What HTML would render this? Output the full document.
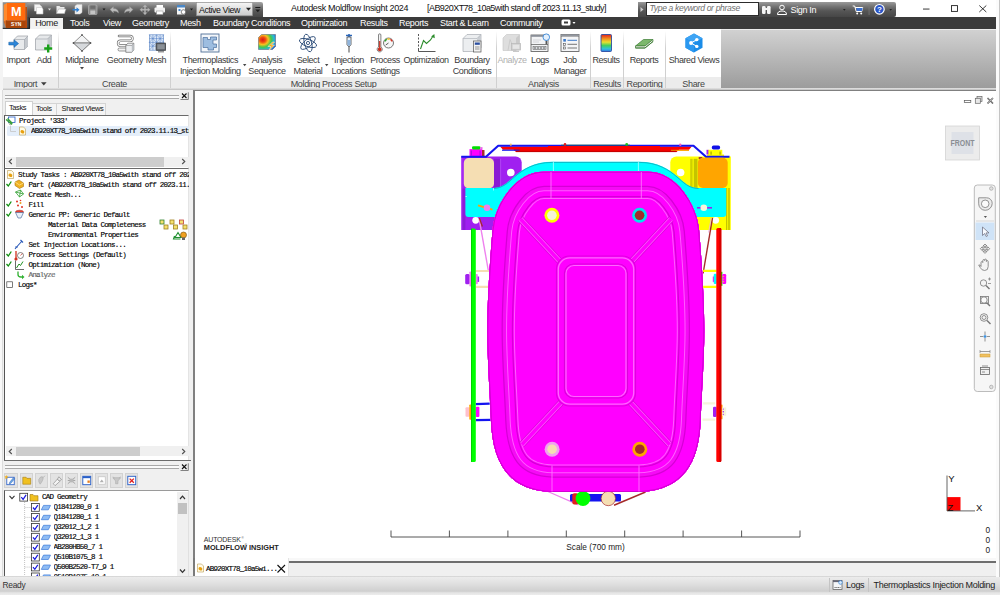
<!DOCTYPE html>
<html><head><meta charset="utf-8"><title>Autodesk Moldflow Insight 2024</title>
<style>
*{box-sizing:border-box;margin:0;padding:0}
html,body{width:1000px;height:595px;overflow:hidden;background:#f0f0f0;font-family:"Liberation Sans",sans-serif;font-size:9px;color:#222}
.abs{position:absolute}
#titlebar{left:0;top:0;width:1000px;height:17px;background:#fff}
#qat{left:27px;top:2px;width:236px;height:15px;background:linear-gradient(#a6a6a6 0%,#7c7c7c 30%,#585858 60%,#474747 100%);border-radius:0 2px 0 0}
#tabbar{left:0;top:17px;width:1000px;height:12px;background:#3b3b3b}
.tab{position:absolute;top:0;height:12px;line-height:12px;color:#fff;font-size:9px;letter-spacing:-.33px;white-space:nowrap}
#hometab{left:30px;top:18px;width:33px;height:11px;background:#f2f2f2;color:#222;font-size:9px;letter-spacing:-.33px;line-height:11px;text-align:center}
#ribbon{left:0;top:29px;width:1000px;height:61px;background:linear-gradient(#d2d2d2,#9a9a9a)}
.panel{position:absolute;top:0;height:48px;background:#fff}
.plabel{position:absolute;top:48px;height:11px;background:#ececec;text-align:center;font-size:9px;letter-spacing:-.33px;line-height:15px;color:#444;border-left:1px solid #d8d8d8}
.btn{position:absolute;top:0;text-align:center;font-size:9px;letter-spacing:-.4px;line-height:11.100px;color:#3a3a3a;white-space:nowrap;width:0}
.btn .t{position:absolute;top:26.300px;left:0;transform:translateX(-50%)}
.mono{font-family:"Liberation Mono",monospace;font-size:7.500px;letter-spacing:-0.750px;white-space:pre;color:#000;-webkit-text-stroke:.15px #000}
.vsep{position:absolute;top:2px;width:1px;height:57px;background:linear-gradient(#fff,#d0d0d0 30%,#d0d0d0)}
.ic{position:absolute;left:-10px;top:4px;width:20px;height:20px}
.grip{height:4px;border-top:1px solid #a8a8a8;border-bottom:1px solid #a8a8a8;background:#fafafa}
.ptab{font-size:7.500px;line-height:12px;color:#111;white-space:nowrap;letter-spacing:-.4px}
.sarrow{font-size:9px;line-height:10px;color:#444;font-family:"Liberation Mono",monospace;font-weight:bold}
.tt{font-size:9px;letter-spacing:-.33px;line-height:13px;color:#111;white-space:nowrap}
</style></head><body>
<!-- ===== TITLE BAR ===== -->
<div id="titlebar" class="abs"></div>
<div id="qat" class="abs"></div>
<div id="tabbar" class="abs">
 <span class="tab" style="left:70px">Tools</span>
 <span class="tab" style="left:103px">View</span>
 <span class="tab" style="left:132px">Geometry</span>
 <span class="tab" style="left:180px">Mesh</span>
 <span class="tab" style="left:213px">Boundary Conditions</span>
 <span class="tab" style="left:301px">Optimization</span>
 <span class="tab" style="left:360px">Results</span>
 <span class="tab" style="left:399px">Reports</span>
 <span class="tab" style="left:440px">Start &amp; Learn</span>
 <span class="tab" style="left:500px">Community</span>
 <svg class="abs" style="left:561px;top:2px" width="16" height="8" viewBox="0 0 16 8"><rect x="0.5" y="0.5" width="9" height="6" rx="1.5" fill="#fff"/><rect x="3" y="2.5" width="4" height="2" fill="#3b3b3b"/><path d="M11.5 3 h3 l-1.5 2z" fill="#fff"/></svg>
</div>
<div id="hometab" class="abs">Home</div>
<div class="abs" id="leftstrip" style="left:0;top:0;width:3px;height:90px;background:#f4f4f4;z-index:3"></div>
<!-- logo -->
<svg class="abs" style="left:0;top:0;z-index:4" width="31" height="30" viewBox="0 0 31 30">
 <rect x="2.700" y="2.200" width="24.500" height="26.300" fill="#8e8e8e"/>
 <path d="M2.700 28.300 H29.600 V18" fill="none" stroke="#1a1a1a" stroke-width=".8"/>
 <path d="M3.800 4.800 L7 3 V20.400 L3.800 21.600z" fill="#ff8a2e"/>
 <path d="M5.900 20.400 H26.900 V28 H5.900z" fill="#a8450a"/>
 <path d="M25.300 7 H26.900 V28 H25.300z" fill="#b8480a"/>
 <path d="M3.800 21.600 L5.900 20.400 V28z" fill="#d8681c"/>
 <rect x="7" y="3" width="18.300" height="17.400" fill="#ff6a0d"/>
 <text x="16.400" y="16.100" font-family="Liberation Sans,sans-serif" font-weight="bold" font-size="12.700" fill="#fff" text-anchor="middle">M</text>
 <text x="16.200" y="25.800" font-family="Liberation Sans,sans-serif" font-weight="bold" font-size="4.900" fill="#fff" text-anchor="middle" textLength="10.200" lengthAdjust="spacingAndGlyphs">SYN</text>
</svg>
<!-- QAT icons -->
<svg class="abs" style="left:27px;top:2px" width="236" height="15" viewBox="0 0 236 15">
 <!-- new doc -->
 <path d="M7.5 2.5 h5 l2.5 2.5 v4 h-7.5z" fill="#f4f4f4" stroke="#d0d0d0" stroke-width=".6"/><path d="M9.5 5.5 h5 l1.5 1.5 v5 h-6.5z" fill="#fff" stroke="#c8c8c8" stroke-width=".6"/>
 <path d="M21 6.5 h3 l-1.5 2z" fill="#ddd"/>
 <!-- open -->
 <path d="M29.5 4 h3 l1 1 h4 v6.5 h-8z" fill="#eaeaea"/><path d="M31.5 7 h7.5 l-1.5 4.5 h-8z" fill="#fff" stroke="#999" stroke-width=".5"/>
 <!-- save/import -->
 <path d="M48 4 l2 -1.5 h5 v8 l-2 1.5 h-5z" fill="#f0f0f0" stroke="#ccc" stroke-width=".5"/><path d="M45.5 7 h4 v-1.8 l3 2.6 -3 2.6 v-1.8 h-4z" fill="#2f7fd0"/>
 <!-- disk (disabled) -->
 <rect x="61.500" y="3" width="8.500" height="9.500" rx="1" fill="#8a8a8a" stroke="#b4b4b4" stroke-width=".7"/><rect x="63.300" y="3.500" width="5" height="3.300" fill="#6e6e6e"/><rect x="63.300" y="8.500" width="5" height="3.500" fill="#c4c4c4"/>
 <path d="M75.500 6.500 h3 l-1.500 2z" fill="#1a1a1a"/>
 <!-- undo redo -->
 <path d="M83 7.500 l3.500 -3 v2 q5 0 5 4.500 q-1.500 -2 -5 -2 v2z" fill="#bcbcbc" stroke="#8a8a8a" stroke-width=".4"/>
 <path d="M106 7.500 l-3.500 -3 v2 q-5 0 -5 4.500 q1.500 -2 5 -2 v2z" fill="#bcbcbc" stroke="#8a8a8a" stroke-width=".4"/>
 <g fill="#b4b4b4" stroke="#8c8c8c" stroke-width=".3"><path d="M118 2.500 l2.300 2.600 h-1.500 v1.900 h1.900 v-1.500 l2.600 2.300 -2.600 2.300 v-1.500 h-1.900 v1.900 h1.500 l-2.300 2.600 -2.300 -2.600 h1.500 v-1.900 h-1.900 v1.500 l-2.600 -2.300 2.600 -2.300 v1.500 h1.900 v-1.900 h-1.500z"/></g>
 <!-- print -->
 <rect x="129.500" y="3" width="6.500" height="3" fill="#fff"/><rect x="127.500" y="5.500" width="10.500" height="5" rx="1" fill="#f2f2f2"/><rect x="129.500" y="9" width="6.500" height="3.500" fill="#fff" stroke="#888" stroke-width=".5"/>
 <!-- view icon -->
 <rect x="150" y="3" width="8" height="9.500" fill="#f6f6f6"/><rect x="150" y="3" width="8" height="2.500" fill="#4a88c8"/><rect x="151.500" y="7" width="2" height="2" fill="#4a88c8"/><circle cx="156.500" cy="10" r="2.300" fill="#fff" stroke="#555" stroke-width=".7"/>
 <path d="M163 6.500 h3 l-1.500 2z" fill="#1a1a1a"/>
 <!-- combo -->
 <rect x="169.500" y=".5" width="56" height="13.300" fill="url(#cg)" stroke="#8a8a8a" stroke-width=".5"/>
 <defs><linearGradient id="cg" x1="0" y1="0" x2="0" y2="1"><stop offset="0" stop-color="#f6f6f6"/><stop offset="1" stop-color="#cacaca"/></linearGradient></defs>
 <text x="172" y="10.500" font-family="Liberation Sans,sans-serif" font-size="8.800" letter-spacing="-.4" fill="#111">Active View</text>
 <path d="M219 5.800 h5 l-2.500 3z" fill="#222"/>
 <rect x="228.300" y="5" width="5" height="1" fill="#1c1c1c"/><path d="M228.300 7.500 h5 l-2.500 2.800z" fill="#1c1c1c"/>
</svg>
<div class="abs tt" style="left:291px;top:2px">Autodesk Moldflow Insight 2024</div>
<div class="abs tt" style="left:427px;top:2px;letter-spacing:-.55px">[AB920XT78_10a5with stand off 2023.11.13_study]</div>
<!-- search / sign-in bar -->
<div class="abs" style="left:637.500px;top:1.600px;width:258.500px;height:15.200px;background:linear-gradient(#9a9a9a 0%,#747474 30%,#555 60%,#464646 100%);border-radius:0 2px 2px 0"></div>
<div class="abs" style="left:646px;top:2.400px;width:113px;height:13.600px;background:#fff;border:1px solid #2c2c2c;font-style:italic;color:#707070;font-size:8.600px;letter-spacing:-.35px;line-height:11.600px;padding-left:2.500px;white-space:nowrap">Type a keyword or phrase</div>
<svg class="abs" style="left:637px;top:2px" width="259" height="15" viewBox="0 0 259 15">
 <path d="M3.500 5 l3 2.500 -3 2.500z" fill="#ccc"/>
 <!-- binoculars -->
 <rect x="125" y="4" width="3.600" height="8" rx="1.200" fill="#f4f4f4"/><rect x="130" y="4" width="3.600" height="8" rx="1.200" fill="#f4f4f4"/><rect x="128" y="6" width="3" height="2" fill="#f4f4f4"/>
 <!-- person -->
 <circle cx="145" cy="5.500" r="2.300" fill="none" stroke="#fff" stroke-width="1"/><path d="M140.500 12.500 q0 -3.500 4.500 -3.500 q4.500 0 4.500 3.500z" fill="none" stroke="#fff" stroke-width="1"/>
 <text x="153.500" y="10.800" font-family="Liberation Sans,sans-serif" font-size="9" letter-spacing="-.33" fill="#fff">Sign In</text>
 <path d="M206 7 h2.600 l-1.300 1.800z" fill="#222"/>
 <!-- cart -->
 <g transform="translate(12.200 0)"><path d="M203.500 4 h2 l1.500 5.500 h5.500 l1 -4 h-7.500" fill="none" stroke="#fff" stroke-width="1"/><circle cx="208" cy="11.500" r="1" fill="#fff"/><circle cx="212" cy="11.500" r="1" fill="#fff"/><path d="M207 6 h6.500 l-.8 3 h-5z" fill="#3a6fd0"/></g>
 <rect x="231.700" y="2" width=".7" height="11" fill="#7c7c7c"/>
 <circle cx="242.400" cy="7.300" r="4.800" fill="#2a56c8" stroke="#fff" stroke-width="1.200"/>
 <text x="242.400" y="10.400" font-family="Liberation Sans,sans-serif" font-weight="bold" font-size="8" fill="#fff" text-anchor="middle">?</text>
 <path d="M252.400 7 h2.600 l-1.300 1.800z" fill="#222"/>
</svg>
<!-- window controls -->
<svg class="abs" style="left:910px;top:0" width="90" height="17" viewBox="0 0 90 17">
 <rect x="13" y="8.600" width="6.500" height=".9" fill="#222"/>
 <rect x="41.500" y="5.600" width="6" height="5.800" fill="none" stroke="#222" stroke-width=".9"/>
 <path d="M69.300 5.500 l7 6.500 M76.300 5.500 l-7 6.500" stroke="#222" stroke-width=".9"/>
</svg>
<!-- ===== RIBBON ===== -->
<div id="ribbon" class="abs">
 <div class="panel" style="left:3px;width:718px"></div>
 <div class="plabel" style="left:3px;width:55px;border-left:none">Import <svg width="6" height="4" viewBox="0 0 6 4" style="position:relative;top:-.8px;margin-left:2px"><path d="M0 .3 h5.600 l-2.800 3.200z" fill="#3c3c3c"/></svg></div>
 <div class="plabel" style="left:58px;width:112px">Create</div>
 <div class="plabel" style="left:170px;width:326px">Molding Process Setup</div>
 <div class="plabel" style="left:496px;width:94px">Analysis</div>
 <div class="plabel" style="left:590px;width:33px">Results</div>
 <div class="plabel" style="left:623px;width:42px">Reporting</div>
 <div class="plabel" style="left:665px;width:56px">Share</div>
 <div class="vsep" style="left:57.500px"></div><div class="vsep" style="left:169.500px"></div><div class="vsep" style="left:495.500px"></div><div class="vsep" style="left:590px"></div><div class="vsep" style="left:622.500px"></div><div class="vsep" style="left:665px"></div>
 <div class="abs" style="left:0;top:0;width:3px;height:60px;background:#f4f4f4"></div>
 <div class="abs" style="left:0;top:59px;width:1000px;height:2px;background:linear-gradient(#e6e6e6,#bdbdbd)"></div>

 <div class="abs" id="toplight" style="left:721px;top:0;width:279px;height:.8px;background:#ececec"></div>
 <!-- Import -->
 <div class="btn" style="left:18px"><svg class="ic" viewBox="0 0 20 20"><path d="M6 6.500 l3.500 -3.500 h10.500 v10 l-3.500 3.500 h-10.500z" fill="#e8eaec" stroke="#8a8f96" stroke-width=".6"/><path d="M16.500 6.500 l3.500 -3.500 v10 l-3.500 3.500z" fill="#c4c8cd"/><path d="M6 6.500 h10.500 l3.500 -3.500 M16.500 6.500 v10" fill="none" stroke="#9aa0a8" stroke-width=".6"/><path d="M.8 9.200 h5.200 v-2.400 l4.600 3.800 -4.600 3.800 v-2.400 h-5.200z" fill="#2c86d8" stroke="#1a5ea0" stroke-width=".5"/></svg><span class="t">Import</span></div>
 <!-- Add -->
 <div class="btn" style="left:44px"><svg class="ic" viewBox="0 0 20 20"><path d="M1.500 6 l4 -4 h12 v11 l-4 4 h-12z" fill="#e6e8ea" stroke="#8a8f96" stroke-width=".6"/><path d="M13.500 6 l4 -4 v11 l-4 4z" fill="#c6cace"/><path d="M1.500 6 h12 l4 -4" fill="none" stroke="#9aa0a8" stroke-width=".6"/><path d="M13 11.500 h2.400 v2.800 h2.800 v2.400 h-2.800 v2.800 h-2.400 v-2.800 h-2.800 v-2.400 h2.800z" fill="#18a018"/></svg><span class="t">Add</span></div>
 <!-- Midplane -->
 <div class="btn" style="left:82px"><svg class="ic" viewBox="0 0 20 20"><path d="M10 2 l8.500 8 -8.500 8 -8.500 -8z" fill="#f2f3f4" stroke="#777" stroke-width=".8"/><path d="M1.500 10 h17" stroke="#777" stroke-width=".8"/><path d="M1.500 10 h17 l-8.500 8z" fill="#d6d9dc" stroke="#777" stroke-width=".8"/><circle cx="10" cy="2" r=".9" fill="#555"/><circle cx="1.500" cy="10" r=".9" fill="#555"/><circle cx="18.500" cy="10" r=".9" fill="#555"/><circle cx="10" cy="18" r=".9" fill="#555"/></svg><span class="t">Midplane</span><svg class="abs" style="left:-2px;top:38px" width="4" height="3"><path d="M0 0 h4 l-2 2.500z" fill="#444"/></svg></div>
 <!-- Geometry -->
 <div class="btn" style="left:125px"><svg class="ic" viewBox="0 0 20 20"><path d="M4 3 H15 a2.400 2.400 0 0 1 0 4.800 H5.500 a2.400 2.400 0 0 0 0 4.800 H12" fill="none" stroke="#6c6c6c" stroke-width="2.500" stroke-linecap="round"/><path d="M4 3 H15 a2.400 2.400 0 0 1 0 4.800 H5.500 a2.400 2.400 0 0 0 0 4.800 H12" fill="none" stroke="#f6f6f6" stroke-width="1.200" stroke-linecap="round"/><rect x="3" y="15" width="9" height="3" rx="1.500" fill="#f2f2f2" stroke="#6c6c6c" stroke-width=".7"/><path d="M10.800 12.500 l2 -2.300 h6 v6.800 l-2 2.300 h-6z" fill="#eceef0" stroke="#6a6a6a" stroke-width=".7"/><path d="M16.800 12.500 l2 -2.300 v6.800 l-2 2.300z" fill="#bcc0c5"/><path d="M10.800 12.500 h6 l2 -2.300" fill="none" stroke="#888" stroke-width=".6"/></svg><span class="t">Geometry</span></div>
 <!-- Mesh -->
 <div class="btn" style="left:156px"><svg class="ic" viewBox="0 0 20 20"><rect x="3.300" y="1.800" width="14.400" height="15.400" fill="#dce8f8" stroke="#5a84c4" stroke-width=".6"/><path d="M3.300 5.600 h14.400 M3.300 9.400 h14.400 M3.300 13.200 h14.400 M6.900 1.800 v15.400 M10.500 1.800 v15.400 M14.100 1.800 v15.400" stroke="#4a78c0" stroke-width=".5"/><path d="M3.300 1.800 l3.600 3.800 3.600 -3.800 3.600 3.800 3.600 -3.800 M3.300 9.400 l3.600 -3.800 3.600 3.800 3.600 -3.800 3.600 3.800 M3.300 9.400 l3.600 3.800 3.600 -3.800 M3.300 17.200 l3.600 -4" stroke="#4a78c0" stroke-width=".45" fill="none"/><rect x="10" y="10" width="10" height="7.500" rx=".8" fill="#5a5e64" stroke="#3a3a3a" stroke-width=".6"/><rect x="11.300" y="11.200" width="7.400" height="5" fill="#8a9096"/><rect x="12" y="18" width="6" height="1.500" fill="#9a9a9a"/></svg><span class="t">Mesh</span></div>
 <!-- Thermoplastics -->
 <div class="btn" style="left:210.300px"><svg class="ic" viewBox="0 0 20 20"><rect x="1" y="1" width="18" height="18" fill="#f3f6fa" stroke="#4f6f98" stroke-width=".9"/><path d="M3 4.500 h4.500 v2 h3 v-2.500 h6 v3 h-3.500 v4 h3.500 v3.500 h-3 v2.500 h-5.500 v-2.500 h-5z" fill="#9dbde0" stroke="#4a6f9c" stroke-width=".7"/></svg><span class="t">Thermoplastics<br>Injection Molding</span></div>
 <svg class="abs" style="left:243.300px;top:34.500px" width="4" height="3"><path d="M0 0 h3.400 l-1.700 2.200z" fill="#444"/></svg>
 <!-- Analysis Sequence -->
 <div class="btn" style="left:267px"><svg class="ic" viewBox="0 0 20 20"><defs><radialGradient id="rg" cx="0.250" cy="0.350" r="0.900"><stop offset="0" stop-color="#d81818"/><stop offset=".18" stop-color="#f04a10"/><stop offset=".36" stop-color="#f8c020"/><stop offset=".55" stop-color="#48c848"/><stop offset=".75" stop-color="#28b8d8"/><stop offset="1" stop-color="#2848c8"/></radialGradient></defs><path d="M1.500 4.500 l3 -3 h14 v12 l-3 3 h-14z" fill="url(#rg)" stroke="#556" stroke-width=".5"/><path d="M15.500 9 l-4.500 4.500 h3 l-2.500 4.500 6 -6 h-3 l3 -3z" fill="#f8a818" stroke="#fff" stroke-width=".5"/></svg><span class="t">Analysis<br>Sequence</span></div>
 <!-- Select Material -->
 <div class="btn" style="left:308px"><svg class="ic" viewBox="0 0 20 20"><g fill="none" stroke="#2c4c78" stroke-width=".9"><ellipse cx="10" cy="10" rx="9" ry="3.600" transform="rotate(20 10 10)"/><ellipse cx="10" cy="10" rx="9" ry="3.600" transform="rotate(75 10 10)"/><ellipse cx="10" cy="10" rx="9" ry="3.600" transform="rotate(-40 10 10)"/><circle cx="10" cy="10" r="1.600"/></g></svg><span class="t">Select<br>Material</span></div>
 <svg class="abs" style="left:325px;top:35.300px" width="4" height="3"><path d="M0 0 h3.400 l-1.700 2.200z" fill="#444"/></svg>
 <!-- Injection Locations -->
 <div class="btn" style="left:349px"><svg class="ic" viewBox="0 0 20 20"><path d="M7 2.500 h6 M10 1 v3" stroke="#2a66b8" stroke-width="1.600"/><path d="M8 4 h4 v7.500 l-1.500 2 h-1 l-1.500 -2z" fill="#e8f0f8" stroke="#444" stroke-width=".8"/><path d="M8.400 7 h3.200 v4.300 l-1.300 1.800 h-.6 l-1.300 -1.800z" fill="#8fb4dc"/><path d="M10 13.500 v6" stroke="#333" stroke-width=".9"/></svg><span class="t">Injection<br>Locations</span></div>
 <!-- Process Settings -->
 <div class="btn" style="left:385px"><svg class="ic" viewBox="0 0 20 20"><path d="M3.500 2 a1.200 1.200 0 0 1 2.400 0 v12 a2.600 2.600 0 1 1 -2.400 0z" fill="#f4f4f4" stroke="#555" stroke-width=".7"/><path d="M4.100 8 h1.200 v6.500 a1.900 1.900 0 1 1 -1.200 0z" fill="#c83020"/><circle cx="13.500" cy="10" r="5" fill="#f6f6f6" stroke="#555" stroke-width=".8"/><path d="M9.800 8.500 a4 4 0 0 1 2 -2.200" stroke="#28a028" stroke-width="1.300" fill="none"/><path d="M12.300 6.200 a4 4 0 0 1 2.600 0" stroke="#f0c020" stroke-width="1.300" fill="none"/><path d="M15.400 6.400 a4 4 0 0 1 1.800 2.100" stroke="#d83020" stroke-width="1.300" fill="none"/><path d="M13.500 10 l-2.800 2" stroke="#333" stroke-width=".8"/></svg><span class="t">Process<br>Settings</span></div>
 <!-- Optimization -->
 <div class="btn" style="left:426px"><svg class="ic" viewBox="0 0 20 20"><path d="M2.500 1 v2 M2.500 4.500 v2 M2.500 8 v2 M2.500 11.500 v2 M2.500 15 v3.500 h17" fill="none" stroke="#444" stroke-width=".9"/><path d="M4.500 16 l3 -8.500 3 3 4 -3.500 2.500 -4" fill="none" stroke="#2c8c2c" stroke-width="1.100"/><path d="M18.300 1 l.5 4.300 -3.600 -1.800z" fill="#2c8c2c"/></svg><span class="t">Optimization</span></div>
 <!-- Boundary Conditions -->
 <div class="btn" style="left:472px"><svg class="ic" viewBox="0 0 20 20"><path d="M1 5.500 l4 -4 h14 v13 l-4 4 h-14z" fill="#eceef0" stroke="#9a9fa6" stroke-width=".6"/><path d="M15 5.500 l4 -4 v13 l-4 4z" fill="#c9cdd2"/><path d="M1 5.500 h14 l4 -4" fill="none" stroke="#a8adb4" stroke-width=".6"/><rect x="11.500" y="8" width="7.500" height="11" fill="#f4f4f4" stroke="#555" stroke-width=".7"/><rect x="12.800" y="9.500" width="5" height="2.300" fill="#2a4ea0"/><path d="M13 14 h4.500 M13 16 h4.500" stroke="#555" stroke-width=".6"/></svg><span class="t">Boundary<br>Conditions</span></div>
 <!-- Analyze (disabled) -->
 <div class="btn" style="left:512px;color:#b0b0b0"><svg class="ic" viewBox="0 0 20 20"><path d="M1 5 l3.500 -3.500 h13 v12.500 l-3.500 3.500 h-13z" fill="#dedede" stroke="#c4c4c4" stroke-width=".6"/><path d="M14 5 l3.500 -3.500 v12.500 l-3.500 3.500z" fill="#cacaca"/><path d="M6 17.500 l2 -11 2 4.500" fill="none" stroke="#c8c8c8" stroke-width=".8"/><rect x="9.500" y="10.500" width="9" height="6.500" fill="#d2d2d2" stroke="#b8b8b8" stroke-width=".7"/><rect x="10.800" y="11.800" width="6.400" height="4" fill="#e6e6e6"/><rect x="11" y="17.600" width="6" height="1.300" fill="#c4c4c4"/></svg><span class="t">Analyze</span></div>
 <!-- Logs -->
 <div class="btn" style="left:540px"><svg class="ic" viewBox="0 0 20 20"><rect x="1" y="2" width="17" height="16.500" fill="#f2f3f5" stroke="#555" stroke-width=".8"/><rect x="1" y="2" width="17" height="1.800" fill="#8a8f98"/><path d="M1 11.500 h17" stroke="#555" stroke-width=".7"/><rect x="3" y="13.500" width="13" height="3" fill="#d8dade" stroke="#555" stroke-width=".5"/><path d="M4 15 h2 M7 15 h2 M10 15 h2 M13 15 h2" stroke="#333" stroke-width=".7"/><path d="M3 7 h8 M3 9 h6" stroke="#c0c4c8" stroke-width=".6"/><path d="M16.300 7.500 v3.800" stroke="#555" stroke-width="1.500"/><circle cx="16.300" cy="4.200" r="3.300" fill="#e4f0fc" stroke="#3a88d8" stroke-width=".9"/></svg><span class="t">Logs</span></div>
 <!-- Job Manager -->
 <div class="btn" style="left:570px"><svg class="ic" viewBox="0 0 20 20"><rect x="1" y="1.500" width="18" height="17" fill="#f4f5f7" stroke="#555" stroke-width=".8"/><rect x="1" y="1.500" width="18" height="1.600" fill="#9a9fa8"/><path d="M1 3.300 h18" stroke="#555" stroke-width=".5"/><rect x="3.300" y="6" width="2.600" height="2.600" fill="#3a78c8"/><path d="M7.500 7.300 h9.500" stroke="#3a78c8" stroke-width="1"/><rect x="3.600" y="10.300" width="2" height="2" fill="none" stroke="#555" stroke-width=".6"/><path d="M7.500 11.300 h9.500 M7.500 15 h9.500" stroke="#555" stroke-width=".8"/><rect x="3.600" y="14" width="2" height="2" fill="none" stroke="#555" stroke-width=".6"/></svg><span class="t">Job<br>Manager</span></div>
 <!-- Results -->
 <div class="btn" style="left:606px"><svg class="ic" viewBox="0 0 20 20"><defs><linearGradient id="lg" x1="0" y1="0" x2="0" y2="1"><stop offset="0" stop-color="#e02020"/><stop offset=".25" stop-color="#f09020"/><stop offset=".45" stop-color="#e8e030"/><stop offset=".65" stop-color="#40d060"/><stop offset=".85" stop-color="#30c0e0"/><stop offset="1" stop-color="#3070e0"/></linearGradient></defs><rect x="5" y="1.500" width="10.500" height="17" rx="1" fill="url(#lg)" stroke="#2c4ca0" stroke-width=".9"/></svg><span class="t">Results</span></div>
 <!-- Reports -->
 <div class="btn" style="left:644px"><svg class="ic" viewBox="0 0 20 20"><path d="M1.500 13 l8 -6.500 h9.500 l-8 6.500z" fill="#7cb86c" stroke="#3c7c34" stroke-width=".7"/><path d="M1.500 13 h9.500 l8 -6.500 v2 l-8 6.500 h-9.500z" fill="#f4f4f0" stroke="#3c7c34" stroke-width=".7"/><path d="M1.500 15 h9.500 l8 -6.500" fill="none" stroke="#3c7c34" stroke-width=".9"/></svg><span class="t">Reports</span></div>
 <!-- Shared Views -->
 <div class="btn" style="left:694px"><svg class="ic" viewBox="0 0 20 20"><path d="M10 .5 l8.500 4.800 v9.400 l-8.500 4.800 -8.500 -4.800 v-9.400z" fill="#1a8ce8"/><path d="M10 .5 l8.500 4.800 -8.500 4.700 -8.500 -4.700z" fill="#3ea4f4"/><path d="M10 10 v9.500 l-8.500 -4.800 v-9.400z" fill="#2a98f0"/><path d="M7 10 l5.500 -3.200 M7 10 l5.500 3.200" stroke="#fff" stroke-width="1"/><circle cx="7" cy="10" r="1.900" fill="#fff"/><circle cx="12.800" cy="6.600" r="1.700" fill="#fff"/><circle cx="12.800" cy="13.400" r="1.700" fill="#fff"/></svg><span class="t">Shared Views</span></div>
</div>
<!-- ===== LEFT PANEL ===== -->
<div class="abs" style="left:0;top:90px;width:194px;height:487px;background:#f0f0f0"></div>
<div class="abs" style="left:0;top:90px;width:3px;height:487px;background:#f8f8f8;border-right:1px solid #dcdcdc"></div>
<!-- grip 1 -->
<div class="abs grip" style="left:5px;top:95px;width:174px"></div>
<svg class="abs" style="left:180px;top:92px" width="9" height="8" viewBox="0 0 9 8"><path d="M8.300 .3 V7.500 H.5" fill="none" stroke="#666" stroke-width=".8"/><path d="M2 1.500 l4.500 4.500 M6.500 1.500 l-4.500 4.500" stroke="#111" stroke-width="1.100"/></svg>
<!-- tabs -->
<div class="abs" style="left:4.500px;top:101px;width:28px;height:14px;background:#fff;border:1px solid #d0d0d0;border-bottom:none"></div>
<div class="abs" style="left:32.500px;top:102.500px;width:24.500px;height:12px;border:1px solid #d4d4d4;border-bottom:none;border-left:none;background:#f4f4f4"></div>
<div class="abs" style="left:57px;top:102.500px;width:49px;height:12px;border:1px solid #d4d4d4;border-bottom:none;border-left:none;background:#f4f4f4"></div>
<div class="abs ptab" style="left:9px;top:101.500px">Tasks</div>
<div class="abs ptab" style="left:36px;top:103px">Tools</div>
<div class="abs ptab" style="left:61.500px;top:103px;letter-spacing:-.35px">Shared Views</div>
<!-- project box -->
<div class="abs" style="left:4px;top:114.500px;width:185px;height:53.500px;background:#fff;border-left:1.500px solid #555;border-top:1.500px solid #6a6a6a;border-right:1px solid #e4e4e4"></div>
<div class="abs" style="left:7px;top:125.500px;width:181.500px;height:10px;background:#e4eefa;border-radius:1.500px"></div>
<svg class="abs" style="left:5px;top:115.500px" width="28" height="20" viewBox="0 0 28 20">
 <rect x="3.500" y="1" width="6.500" height="5.500" fill="#fff" stroke="#2a60c8" stroke-width=".8"/><path d="M1 3.500 l6 5 M2.500 2.500 l5 5" stroke="#3aa03a" stroke-width="1.300"/><path d="M4 7.500 l1.500 1.500" stroke="#888" stroke-width="1"/>
 <path d="M5.500 9.500 V15.500 H11" fill="none" stroke="#c4c4c4" stroke-width=".8"/>
 <path d="M14.500 11 h4 l2 2 v6 h-6z" fill="#fffbe8" stroke="#b89a50" stroke-width=".6"/><ellipse cx="17.400" cy="15.800" rx="2" ry="1.600" fill="#e8a010" transform="rotate(25 17.400 15.800)"/>
</svg>
<div class="abs mono" style="left:19px;top:116px;line-height:10px">Project '333'</div>
<div class="abs mono" style="left:31px;top:126px;line-height:10px;width:157.500px;overflow:hidden">AB920XT78_10a5with stand off 2023.11.13_study</div>
<!-- hscroll 1 -->
<div class="abs" style="left:5.500px;top:157px;width:183px;height:9.500px;background:#f0f0f0"></div>
<div class="abs" style="left:16px;top:157px;width:148px;height:9.500px;background:#cdcdcd"></div>
<svg class="abs" style="left:7.5px;top:157.2px" width="5" height="9" viewBox="0 0 5 9"><path d="M3.800 2 L1.200 4.500 L3.800 7" fill="none" stroke="#505050" stroke-width="1.100"/></svg><svg class="abs" style="left:181px;top:157.2px" width="5" height="9" viewBox="0 0 5 9"><path d="M1.200 2 L3.800 4.500 L1.200 7" fill="none" stroke="#505050" stroke-width="1.100"/></svg>
<!-- study tasks box -->
<div class="abs" style="left:4px;top:168px;width:185px;height:291.500px;background:#fff;border-left:1.500px solid #555;border-top:1.500px solid #6a6a6a;border-right:1px solid #e4e4e4"></div>
<div class="abs" style="left:4px;top:459.800px;width:186.600px;height:1.200px;background:#6c6c6c"></div>
<div class="abs mono" style="left:18px;top:169.600px;line-height:10px;width:171px;overflow:hidden"><div>Study Tasks : AB920XT78_10a5with stand off 2023</div><div style="padding-left:10.500px">Part (AB920XT78_10a5with stand off 2023.11.13</div><div style="padding-left:10.500px">Create Mesh...</div><div style="padding-left:10.500px">Fill</div><div style="padding-left:10.500px">Generic PP: Generic Default</div><div style="padding-left:30px">Material Data Completeness</div><div style="padding-left:30px">Environmental Properties</div><div style="padding-left:10.500px">Set Injection Locations...</div><div style="padding-left:10.500px">Process Settings (Default)</div><div style="padding-left:10.500px">Optimization (None)</div><div style="padding-left:10.500px;color:#8a8a8a">Analyze</div><div style="margin-left:0">Logs*</div></div>
<svg class="abs" style="left:5px;top:169px" width="184" height="122" viewBox="0 0 184 122">
 <!-- study icon -->
 <path d="M2.500 1.500 h4 l2 2 v6 h-6z" fill="#fffbe8" stroke="#b89a50" stroke-width=".6"/><ellipse cx="5.400" cy="6.300" rx="2" ry="1.600" fill="#e8a010" transform="rotate(25 5.400 6.300)"/>
 <!-- check marks -->
 <g fill="none" stroke="#109010" stroke-width="1.300"><path d="M1.500 15 l1.800 2 3 -4.500"/><path d="M1.500 35 l1.800 2 3 -4.500"/><path d="M1.500 45 l1.800 2 3 -4.500"/><path d="M1.500 85 l1.800 2 3 -4.500"/><path d="M1.500 95 l1.800 2 3 -4.500"/></g>
 <!-- part icon -->
 <path d="M10 13 l4 -2 4.500 3 v3.500 l-4 2 -4.500 -3z" fill="#f0b020" stroke="#a87410" stroke-width=".6"/><path d="M10 13 l4.500 3 4 -2" fill="none" stroke="#fff0b0" stroke-width=".6"/>
 <!-- create mesh -->
 <path d="M10.500 23 l5 -2 3 4 -4 3z M15.500 21 l-1 7 M10.500 23 l8 2" fill="none" stroke="#30a030" stroke-width=".8"/>
 <!-- fill -->
 <circle cx="12" cy="32.500" r="1" fill="#e03020"/><circle cx="15.500" cy="34" r="1" fill="#e8a020"/><circle cx="13" cy="36.500" r="1" fill="#e03020"/><circle cx="17" cy="38" r="1" fill="#e03020"/><circle cx="15.500" cy="31.500" r=".8" fill="#e03020"/>
 <!-- material -->
 <ellipse cx="14.500" cy="43" rx="4" ry="1.800" fill="#e84030" stroke="#a02018" stroke-width=".5"/><path d="M10.500 43.500 l2.500 5.500 h3 l2.500 -5.500z" fill="#e8f0f8" stroke="#5070a0" stroke-width=".7"/>
 <!-- right icons rows 5,6 -->
 <g stroke-width=".8" fill="#f4e070"><rect x="155" y="51" width="4" height="4" stroke="#308030"/><rect x="159" y="56" width="4" height="4" stroke="#a08020"/><rect x="165" y="51" width="4" height="4" stroke="#a08020"/><rect x="168.500" y="56" width="4" height="4" stroke="#a08020"/><rect x="174.500" y="51" width="4" height="4" stroke="#c04040"/><rect x="178" y="56" width="4" height="4" stroke="#a08020"/></g>
 <path d="M170 68.500 l3 -5 3 5z M171.500 70 h4 M169.500 67 l-1 3 h3" fill="none" stroke="#209030" stroke-width="1.100"/>
 <circle cx="178.500" cy="66" r="3" fill="#f0a020" stroke="#705010" stroke-width=".6"/><rect x="177" y="68.500" width="3" height="2.500" fill="#666"/>
 <!-- injection -->
 <path d="M17 72 l-4.500 5 M15.500 71 l2.500 2.500 M12.500 77 l-2.500 3" stroke="#2858b8" stroke-width="1.100" fill="none"/><path d="M10 78 h3" stroke="#2858b8" stroke-width=".8"/>
 <!-- process settings -->
 <path d="M11 82 v7" stroke="#d03020" stroke-width="1.300"/><circle cx="11" cy="90" r="1.600" fill="#d03020"/><circle cx="15.500" cy="86.500" r="3" fill="#fff" stroke="#555" stroke-width=".7"/><path d="M15.500 86.500 l1.800 -2" stroke="#d03020" stroke-width=".7"/>
 <!-- optimization -->
 <path d="M10.500 91.500 v9 h8.500" fill="none" stroke="#444" stroke-width=".8"/><path d="M11.500 99 l2.500 -4 1.500 1.500 2.500 -4" fill="none" stroke="#209020" stroke-width="1"/>
 <!-- analyze -->
 <path d="M13 102.500 v3 q0 2.500 3 2.500 h1.500" fill="none" stroke="#30b030" stroke-width="1.300"/><path d="M17 105.800 l2.500 2.200 -2.500 2.200z" fill="#30b030"/>
 <!-- logs checkbox -->
 <rect x="1.800" y="112.800" width="5.600" height="5.600" fill="#fff" stroke="#444" stroke-width=".7"/>
</svg>
<!-- hscroll 2 -->
<div class="abs" style="left:5.500px;top:446px;width:183px;height:10px;background:#f0f0f0"></div>
<div class="abs" style="left:16px;top:446.500px;width:124px;height:9px;background:#cdcdcd"></div>
<svg class="abs" style="left:7.5px;top:446.5px" width="5" height="9" viewBox="0 0 5 9"><path d="M3.800 2 L1.200 4.500 L3.800 7" fill="none" stroke="#505050" stroke-width="1.100"/></svg><svg class="abs" style="left:181px;top:446.5px" width="5" height="9" viewBox="0 0 5 9"><path d="M1.200 2 L3.800 4.500 L1.200 7" fill="none" stroke="#505050" stroke-width="1.100"/></svg>
<!-- grip 2 -->
<div class="abs grip" style="left:5px;top:465px;width:174px"></div>
<svg class="abs" style="left:180px;top:463px" width="9" height="8" viewBox="0 0 9 8"><path d="M8.300 .3 V7.500 H.5" fill="none" stroke="#666" stroke-width=".8"/><path d="M2 1.500 l4.500 4.500 M6.500 1.500 l-4.500 4.500" stroke="#111" stroke-width="1.100"/></svg>
<!-- ===== LAYERS PANEL ===== -->
<div class="abs" style="left:4.4px;top:472.500px;width:13.500px;height:15px;background:#e3e3e3;border:1px solid #d2d2d2"></div>
<svg class="abs" style="left:4.4px;top:472.500px" width="13.500" height="15" viewBox="0 0 14.500 16"><rect x="3" y="4.500" width="8" height="8" fill="#fff" stroke="#2a60c8" stroke-width=".9"/><path d="M6 10 l4 -5 1.500 1 -4 5 -2 .8z" fill="#6aa8e8" stroke="#2a50a0" stroke-width=".4"/><path d="M2.500 2 l.6 1.500 1.500 .3 -1.200 1 .3 1.600 -1.200 -.9 -1.300 .9 .4 -1.600 -1.100 -1 1.500 -.3z" fill="#f0b020"/></svg>
<div class="abs" style="left:19.5px;top:472.500px;width:13.500px;height:15px;background:#e3e3e3;border:1px solid #d2d2d2"></div>
<svg class="abs" style="left:19.5px;top:472.500px" width="13.500" height="15" viewBox="0 0 14.500 16"><path d="M3 4.500 h3.500 l1 1.200 h4 v6.300 h-8.500z" fill="#f0c020" stroke="#a07810" stroke-width=".6"/></svg>
<div class="abs" style="left:34.5px;top:472.500px;width:13.500px;height:15px;background:#e3e3e3;border:1px solid #d2d2d2"></div>
<svg class="abs" style="left:34.5px;top:472.500px" width="13.500" height="15" viewBox="0 0 14.500 16"><path d="M4 7 q2 -4 4 -3 q2 1 -1 6 l-1.500 2 q-2 -3 -1.500 -5z M8 5 l3 -2" fill="#c8c8c8" stroke="#a8a8a8" stroke-width=".6"/></svg>
<div class="abs" style="left:49.6px;top:472.500px;width:13.500px;height:15px;background:#e3e3e3;border:1px solid #d2d2d2"></div>
<svg class="abs" style="left:49.6px;top:472.500px" width="13.500" height="15" viewBox="0 0 14.500 16"><path d="M3.500 11.500 l4.500 -5 2.500 2.500 -5 4.500z" fill="#f4f4f4" stroke="#888" stroke-width=".7"/><path d="M8 6.500 l1.500 -2.500 3 3 -2.500 1.500z" fill="#e8e8e8" stroke="#888" stroke-width=".7"/></svg>
<div class="abs" style="left:64.6px;top:472.500px;width:13.500px;height:15px;background:#e3e3e3;border:1px solid #d2d2d2"></div>
<svg class="abs" style="left:64.6px;top:472.500px" width="13.500" height="15" viewBox="0 0 14.500 16"><path d="M3 4.500 l8 7 M11 4.500 l-8 7 M3 8 h8" stroke="#a0a0a0" stroke-width="1"/><rect x="5" y="6" width="4" height="4" fill="#b8b8b8"/></svg>
<div class="abs" style="left:79.7px;top:472.500px;width:13.500px;height:15px;background:#e3e3e3;border:1px solid #d2d2d2"></div>
<svg class="abs" style="left:79.7px;top:472.500px" width="13.500" height="15" viewBox="0 0 14.500 16"><rect x="3" y="3.500" width="8.500" height="9" fill="#fff" stroke="#2a60c8" stroke-width="1"/><rect x="3" y="3.500" width="8.500" height="2" fill="#2a60c8"/><rect x="8" y="8" width="2.500" height="2.500" fill="#e88020"/></svg>
<div class="abs" style="left:94.7px;top:472.500px;width:13.500px;height:15px;background:#e3e3e3;border:1px solid #d2d2d2"></div>
<svg class="abs" style="left:94.7px;top:472.500px" width="13.500" height="15" viewBox="0 0 14.500 16"><rect x="3.500" y="4" width="7.500" height="8" fill="#fff" stroke="#c4c4c4" stroke-width=".8"/><path d="M5 10 h4.500 l-2.200 -3z" fill="#b0b0b0"/></svg>
<div class="abs" style="left:109.8px;top:472.500px;width:13.500px;height:15px;background:#e3e3e3;border:1px solid #d2d2d2"></div>
<svg class="abs" style="left:109.8px;top:472.500px" width="13.500" height="15" viewBox="0 0 14.500 16"><path d="M3 5 h8.500 l-3 3.500 v3 h-2.500 v-3z" fill="#c8c8c8" stroke="#aaa" stroke-width=".6"/><path d="M3 4 l2 1.500 M11.500 4 l-2 1.500" stroke="#b0b0b0" stroke-width=".7"/></svg>
<div class="abs" style="left:124.8px;top:472.500px;width:13.500px;height:15px;background:#e3e3e3;border:1px solid #d2d2d2"></div>
<svg class="abs" style="left:124.8px;top:472.500px" width="13.500" height="15" viewBox="0 0 14.500 16"><rect x="3" y="3.500" width="8.500" height="9" fill="#fff" stroke="#2a60c8" stroke-width="1"/><path d="M5 6 l4.500 4.500 M9.500 6 l-4.500 4.500" stroke="#e02020" stroke-width="1.400"/></svg>
<div class="abs" style="left:3.500px;top:490px;width:185.500px;height:86.500px;background:#fff;border-left:1.500px solid #555;border-top:1px solid #9a9a9a;border-right:1px solid #e0e0e0;overflow:hidden"></div>
<div class="abs" style="left:177px;top:491.500px;width:11px;height:85px;background:#f0f0f0"></div>
<div class="abs" style="left:178px;top:503px;width:9px;height:10.500px;background:#c1c1c1"></div>
<svg class="abs" style="left:177px;top:491.500px" width="11" height="85" viewBox="0 0 11 85"><path d="M3 7 l2.500 -2.800 2.500 2.800" fill="none" stroke="#333" stroke-width="1.200"/><path d="M3 77.500 l2.500 2.800 2.500 -2.800" fill="none" stroke="#333" stroke-width="1.200"/></svg>
<svg class="abs" style="left:5px;top:491.500px" width="172" height="85" viewBox="0 0 172 85"><path d="M4.500 3.800 l2.500 2.800 2.500 -2.800" fill="none" stroke="#333" stroke-width="1.100"/><rect x="14.800" y="1.300" width="7.800" height="7.800" fill="#fff" stroke="#333" stroke-width=".8"/><path d="M16.300 5.200 l1.800 2.200 3 -4.500" fill="none" stroke="#1a1ae0" stroke-width="1.200"/><path d="M25 2.500 h3 l1 1.200 h4 v5.300 h-8z" fill="#f0c020" stroke="#a07810" stroke-width=".6"/><path d="M19.600 10 V85" stroke="#aaa" stroke-width=".7" stroke-dasharray="1 1"/><path d="M19.600 15.5 H26" stroke="#aaa" stroke-width=".7" stroke-dasharray="1 1"/><rect x="26.500" y="11.5" width="7.800" height="7.800" fill="#fff" stroke="#333" stroke-width=".8"/><path d="M28 15.5 l1.800 2.200 3 -4.500" fill="none" stroke="#1a1ae0" stroke-width="1.200"/><path d="M36.300 17.8 l2.200 -4.400 h7 l-2.200 4.400z" fill="#8fbcf4" stroke="#3a78d8" stroke-width=".7"/><path d="M19.600 25.4 H26" stroke="#aaa" stroke-width=".7" stroke-dasharray="1 1"/><rect x="26.500" y="21.4" width="7.800" height="7.800" fill="#fff" stroke="#333" stroke-width=".8"/><path d="M28 25.4 l1.800 2.200 3 -4.500" fill="none" stroke="#1a1ae0" stroke-width="1.200"/><path d="M36.300 27.7 l2.200 -4.400 h7 l-2.200 4.400z" fill="#8fbcf4" stroke="#3a78d8" stroke-width=".7"/><path d="M19.600 35.4 H26" stroke="#aaa" stroke-width=".7" stroke-dasharray="1 1"/><rect x="26.500" y="31.4" width="7.800" height="7.800" fill="#fff" stroke="#333" stroke-width=".8"/><path d="M28 35.4 l1.800 2.200 3 -4.500" fill="none" stroke="#1a1ae0" stroke-width="1.200"/><path d="M36.300 37.7 l2.200 -4.400 h7 l-2.200 4.400z" fill="#8fbcf4" stroke="#3a78d8" stroke-width=".7"/><path d="M19.600 45.3 H26" stroke="#aaa" stroke-width=".7" stroke-dasharray="1 1"/><rect x="26.500" y="41.3" width="7.800" height="7.800" fill="#fff" stroke="#333" stroke-width=".8"/><path d="M28 45.3 l1.800 2.200 3 -4.500" fill="none" stroke="#1a1ae0" stroke-width="1.200"/><path d="M36.300 47.6 l2.200 -4.400 h7 l-2.200 4.400z" fill="#8fbcf4" stroke="#3a78d8" stroke-width=".7"/><path d="M19.600 55.2 H26" stroke="#aaa" stroke-width=".7" stroke-dasharray="1 1"/><rect x="26.500" y="51.2" width="7.800" height="7.800" fill="#fff" stroke="#333" stroke-width=".8"/><path d="M28 55.2 l1.800 2.200 3 -4.500" fill="none" stroke="#1a1ae0" stroke-width="1.200"/><path d="M36.300 57.5 l2.200 -4.400 h7 l-2.200 4.400z" fill="#8fbcf4" stroke="#3a78d8" stroke-width=".7"/><path d="M19.600 65.2 H26" stroke="#aaa" stroke-width=".7" stroke-dasharray="1 1"/><rect x="26.500" y="61.2" width="7.800" height="7.800" fill="#fff" stroke="#333" stroke-width=".8"/><path d="M28 65.2 l1.800 2.200 3 -4.500" fill="none" stroke="#1a1ae0" stroke-width="1.200"/><path d="M36.300 67.5 l2.200 -4.400 h7 l-2.200 4.400z" fill="#8fbcf4" stroke="#3a78d8" stroke-width=".7"/><path d="M19.600 75.1 H26" stroke="#aaa" stroke-width=".7" stroke-dasharray="1 1"/><rect x="26.500" y="71.1" width="7.800" height="7.800" fill="#fff" stroke="#333" stroke-width=".8"/><path d="M28 75.1 l1.800 2.200 3 -4.500" fill="none" stroke="#1a1ae0" stroke-width="1.200"/><path d="M36.300 77.4 l2.200 -4.400 h7 l-2.200 4.400z" fill="#8fbcf4" stroke="#3a78d8" stroke-width=".7"/><path d="M19.600 85.0 H26" stroke="#aaa" stroke-width=".7" stroke-dasharray="1 1"/><rect x="26.500" y="81.0" width="7.800" height="7.800" fill="#fff" stroke="#333" stroke-width=".8"/><path d="M28 85.0 l1.800 2.200 3 -4.500" fill="none" stroke="#1a1ae0" stroke-width="1.200"/><path d="M36.300 87.3 l2.200 -4.400 h7 l-2.200 4.400z" fill="#8fbcf4" stroke="#3a78d8" stroke-width=".7"/></svg>
<div class="abs mono" style="left:42px;top:492px;line-height:10px">CAD Geometry</div>
<div class="abs" style="left:53.500px;top:503.200px;height:73px;overflow:hidden;width:120px">
<div class="mono" style="line-height:9.930px;height:9.930px">Q1841280_0 1</div>
<div class="mono" style="line-height:9.930px;height:9.930px">Q1841280_1 1</div>
<div class="mono" style="line-height:9.930px;height:9.930px">Q32012_1_2 1</div>
<div class="mono" style="line-height:9.930px;height:9.930px">Q32012_1_3 1</div>
<div class="mono" style="line-height:9.930px;height:9.930px">AB280HB50_7 1</div>
<div class="mono" style="line-height:9.930px;height:9.930px">Q510B1075_8 1</div>
<div class="mono" style="line-height:9.930px;height:9.930px">Q500B2520-T7_9 1</div>
<div class="mono" style="line-height:9.930px;height:9.930px">Q510B1075_10 1</div>
</div>
<!-- ===== MAIN VIEW ===== -->
<div class="abs" style="left:193px;top:90px;width:804px;height:472.500px;background:#fff;border-left:2px solid #808080;border-top:1.400px solid #808080"></div>
<div class="abs" style="left:996px;top:0;width:4px;height:577px;background:#fbfbfb;z-index:5"></div><div class="abs" style="left:998.600px;top:0;width:.9px;height:577px;background:#c4c4c4;z-index:6"></div>
<svg class="abs" style="left:195px;top:91.500px" width="802" height="467" viewBox="195 91.500 802 467" font-family="Liberation Sans,sans-serif">
 <!-- window min/restore/close -->
 <rect x="964.300" y="100" width="6.500" height="2" fill="#fff" stroke="#555" stroke-width=".7"/>
 <rect x="977" y="96" width="5" height="5" fill="#ddd" stroke="#666" stroke-width=".7"/><rect x="975.300" y="97.800" width="5" height="5" fill="#e8e8e8" stroke="#666" stroke-width=".7"/>
 <path d="M987.500 97.500 l5.500 5.500 M993 97.500 l-5.500 5.500" stroke="#444" stroke-width="1.500"/><path d="M987.500 97.500 l5.500 5.500 M993 97.500 l-5.500 5.500" stroke="#fff" stroke-width=".5"/>
 <!-- FRONT cube -->
 <rect x="945.500" y="125.500" width="34" height="34" fill="#ececec" stroke="#d4d4d4" stroke-width=".8"/>
 <rect x="951.500" y="131.500" width="22" height="22" fill="#dee1e7"/>
 <text x="962.500" y="145.600" font-size="9.300" font-weight="bold" fill="#8a8e94" text-anchor="middle" textLength="24" lengthAdjust="spacingAndGlyphs">FRONT</text>

 <!-- ===== CAD MODEL ===== -->
 <g id="model">
 <!-- purple bracket -->
 <path d="M461 156 H515.700 a6 6 0 0 1 6 6 V229.500 H461z" fill="#a020f0"/>
 <rect x="494" y="158.300" width="6" height="29" fill="#8a1ad4"/><rect x="500.300" y="158.300" width=".8" height="29" fill="#b44cf4"/><rect x="461" y="188" width="4.400" height="41.500" fill="#8c1cd8"/><rect x="461" y="156" width="1.200" height="73.500" fill="#b850f8"/>
 <circle cx="510.800" cy="172" r="3.800" fill="#fff"/><circle cx="475.700" cy="219.800" r="3.400" fill="#fff"/>
 <!-- yellow bracket -->
 <path d="M730.800 156 H676.300 a6 6 0 0 0 -6 6 V229.500 H730.800z" fill="#ffff00"/>
 <rect x="690.200" y="158.300" width="2.400" height="29" fill="#d0d000"/><rect x="693.700" y="158.300" width="3.800" height="29" fill="#c4c400"/><rect x="727.700" y="187.500" width="2.300" height="42" fill="#d0d000"/><rect x="726.200" y="187.500" width=".8" height="42" fill="#b8b800"/>
 <circle cx="680.600" cy="172" r="3.800" fill="#fff"/><circle cx="715.700" cy="219.800" r="3.400" fill="#fff"/>
 <!-- top small nuts -->
 <rect x="469.500" y="148.600" width="12.700" height="7.400" fill="#ff00ff"/><rect x="470.800" y="150" width=".9" height="5" fill="#8a1ad4"/><rect x="479.600" y="150" width=".9" height="5" fill="#8a1ad4"/><rect x="472" y="145.800" width="8.500" height="3.100" rx="1.300" fill="#00e000"/><rect x="480.300" y="146.600" width="2.200" height="2.400" fill="#ee60ee"/><rect x="482" y="149.500" width="2.500" height="6.500" fill="#a52a2a"/>
 <rect x="708" y="149.300" width="14.300" height="6.700" fill="#ffff00"/><rect x="707" y="154" width="17" height="2" fill="#ffff00"/><rect x="710.600" y="151" width=".9" height="3.200" fill="#8a8a00"/><rect x="719.600" y="151" width=".9" height="3.200" fill="#8a8a00"/><rect x="711.800" y="145.100" width="8.300" height="3.800" rx="1.700" fill="#1010e8"/><rect x="706.500" y="149.300" width="1.900" height="4.700" fill="#a020f0"/><rect x="698.500" y="156.400" width="4" height="2" rx="1" fill="#a03030"/>
 <!-- red bar -->
 <path d="M500 146 H691.800 L689 149.300 H679 L676.500 151.600 H516 L513.500 149.300 H503z" fill="#ff0000"/>
 <path d="M502 149.700 H519.600" stroke="#1414f0" stroke-width="1.200"/><path d="M671 149.900 H689" stroke="#ffa500" stroke-width="1.100"/>
 <!-- blue line -->
 <path d="M461.300 156.300 H486 L498.200 145.300 H693.500 L706 156.300 H729.500" fill="none" stroke="#1414f0" stroke-width="2.100" stroke-linejoin="round"/>
 <rect x="548" y="145.500" width="112" height="1.200" fill="#ff0000"/><rect x="516" y="150.200" width="160.500" height="1.400" fill="#c80000"/><path d="M561 144.600 H630" stroke="#208020" stroke-width=".7"/><circle cx="510.800" cy="144.200" r="1.100" fill="#f0c070"/><circle cx="565" cy="143.900" r="1.300" fill="#e02020"/><circle cx="626.700" cy="143.900" r="1.400" fill="#20c020"/><circle cx="680.300" cy="144.200" r="1.200" fill="#f060c0"/>
 <!-- wheat & orange blocks -->
 <rect x="463.800" y="157.500" width="30.200" height="30.400" rx="5" fill="#f5deb3"/>
 <rect x="697.900" y="157.200" width="29.800" height="30.300" rx="5" fill="#ffa500"/>
 <!-- cyan frame -->
 <path d="M465.400 187.500 H493 C503 187.500 508 181 514 176 C522 169 534 161.200 552 161.200 H639.600 C657.600 161.200 669.600 169 677.600 176 C683.600 181 688.600 187.500 698.600 187.500 H726.200 V213.600 a3 3 0 0 1 -3 3 H468.400 a3 3 0 0 1 -3 -3z" fill="#00ffff"/>
 <path d="M493 188 C503 188 508.500 181.500 514.500 176.500 C522.500 169.500 534 161.900 552 161.900 H639.600 C657.600 161.900 669 169.500 677 176.500 C683 181.500 688.600 188 698.600 188" fill="none" stroke="#10b0c0" stroke-width=".9"/>
 <path d="M553.400 161.500 V171 M638.400 161.500 V171 M493.500 187.500 V190 M465.400 196 H467 " stroke="#b0ffff" stroke-width=".8"/>
 <!-- items on cyan -->
 <path d="M478 204.800 L492.500 209.200" stroke="#ffa500" stroke-width="1.800"/><circle cx="487" cy="207.200" r="3.300" fill="#ee82ee"/>
 <path d="M697 207.300 H712" stroke="#a020f0" stroke-width="1.600"/><circle cx="703.800" cy="207.200" r="3.300" fill="#f5f5dc"/>
 <!-- thin diagonal lines -->
 <path d="M479 217.400 L488.500 271" stroke="#ee82ee" stroke-width="1.400"/><path d="M479.300 217.400 L482.400 226" stroke="#a52a2a" stroke-width="1.300"/>
 <path d="M712.500 217.400 L703.100 273" stroke="#a52a2a" stroke-width="1.400"/><path d="M711.300 217.400 L708.500 232" stroke="#eeb0ee" stroke-width=".8"/>
 <!-- side attachments (behind bars) -->
 <path d="M475.800 270.500 H488.800 M475.800 286.400 H488.800" stroke="#f5deb3" stroke-width="2.200"/>
 <rect x="465.200" y="273.600" width="4.600" height="10.200" rx="1.500" fill="#a020f0"/><rect x="469.400" y="271" width="1.800" height="15" rx=".8" fill="#ee82ee"/><rect x="475.600" y="273.600" width="2.200" height="10.200" rx=".8" fill="#ee82ee"/><rect x="477.600" y="276" width="1.500" height="5.400" fill="#a020f0"/>
 <path d="M703.100 270.300 H716.500 M703.100 286.400 H716.500" stroke="#ffff00" stroke-width="2.300"/>
 <rect x="712.800" y="276" width="1.200" height="5.400" fill="#ff00ff"/><rect x="713.700" y="273.200" width="3" height="10.200" rx="1.200" fill="#00ffff"/><rect x="721" y="271.300" width="1.400" height="14" fill="#00e000"/><rect x="722.300" y="273.600" width="3.900" height="9.800" rx="1.200" fill="#ff00ff"/><circle cx="723.300" cy="275.800" r=".6" fill="#ffff00"/><circle cx="723.300" cy="278.500" r=".6" fill="#ffff00"/><circle cx="723.300" cy="281.200" r=".6" fill="#ffff00"/>
 <path d="M475.800 403.600 L489.700 403.200 M475.800 419.700 L490.700 419.300" stroke="#1414f0" stroke-width="2.300"/>
 <rect x="465.500" y="406.700" width="4.200" height="9.500" rx="1" fill="#ffc0cb"/><rect x="469.300" y="404" width="2" height="15.200" rx=".8" fill="#ffa500"/><rect x="475.600" y="406.300" width="3.800" height="10.200" rx="1" fill="#ff00ff"/>
 <path d="M703.100 402.900 H715.200 M702.600 419.200 H715.200" stroke="#f5f5dc" stroke-width="2.300"/>
 <rect x="713" y="406.300" width="3.600" height="10.200" rx="1.300" fill="#a020f0"/><rect x="721" y="404" width="1.500" height="14.800" rx=".6" fill="#ffa500"/><rect x="722.300" y="407" width="3.900" height="8.400" fill="#f5f5dc"/><circle cx="723.300" cy="408.600" r=".6" fill="#a020f0"/><circle cx="723.300" cy="411.200" r=".7" fill="#a020f0"/><circle cx="723.300" cy="413.800" r=".6" fill="#a020f0"/>
 <!-- side bars -->
 <rect x="471" y="228" width="4.800" height="233.500" rx="1.500" fill="#00ff00"/><rect x="471" y="228" width=".9" height="233.500" fill="#00d000"/>
 <rect x="716.300" y="227.500" width="5" height="234" rx="1.500" fill="#ff0000"/><rect x="719.300" y="227.500" width="2" height="234" rx="1" fill="#d40000"/>
 <!-- bottom items -->
 <path d="M546.700 490.500 L578.500 504.300" stroke="#ee82ee" stroke-width="1.300"/>
 <path d="M645.500 491.500 L614 504.800" stroke="#a52a2a" stroke-width="1.500"/>
 <rect x="570" y="493.600" width="51" height="7.400" rx="1.500" fill="#1414f0"/>
 <rect x="572.300" y="492.800" width="6" height="11.200" rx="2" fill="#e02020"/>
 <circle cx="583" cy="498" r="7.400" fill="#00ff00"/>
 <circle cx="608.300" cy="498" r="7.200" fill="#f5deb3" stroke="#a52a2a" stroke-width=".7"/>
 <!-- magenta body -->
 <defs><path id="body" d="M544 171.100 H647.600 C676.600 171.100 697.100 205 699.100 229.400 C701.800 262 704.300 300 704.300 330 C704.300 360 701.500 395 700.700 420 C699.100 462 683.600 490 639.600 491.500 H552 C508 490 492.500 462 490.900 420 C490 395 487.300 360 487.300 330 C487.300 300 489.800 262 492.500 229.400 C494.500 205 515 171.100 544 171.100z"/><clipPath id="bc"><use href="#body"/></clipPath></defs>
 <use href="#body" fill="#ff00ff"/>
 <g clip-path="url(#bc)" fill="none" stroke-linejoin="round">
  <use href="#body" stroke="#ff5cff" stroke-width="55"/>
  <use href="#body" stroke="#ff00ff" stroke-width="53"/>
  <use href="#body" stroke="#d600d6" stroke-width="51.500"/>
  <use href="#body" stroke="#ff00ff" stroke-width="49"/>
  <use href="#body" stroke="#ff5cff" stroke-width="39.500"/>
  <use href="#body" stroke="#f60af6" stroke-width="37.500"/>
  <use href="#body" stroke="#d600d6" stroke-width="31"/>
  <use href="#body" stroke="#ff00ff" stroke-width="28.500"/>
  <use href="#body" stroke="#d400d4" stroke-width="2.200"/>
 </g>
 <g fill="none">
  <g stroke="#dc00dc" stroke-width="6.600"><path d="M559.500 260.500 L520.500 218.500"/><path d="M632 260.500 L671 218.500"/><path d="M561.500 401.500 L522 444"/><path d="M630 401.500 L669.500 444"/></g>
  <g stroke="#ff58ff" stroke-width="5"><path d="M559.500 260.500 L520.500 218.500"/><path d="M632 260.500 L671 218.500"/><path d="M561.500 401.500 L522 444"/><path d="M630 401.500 L669.500 444"/></g>
  <g stroke="#ff00ff" stroke-width="3.400"><path d="M559.500 260.500 L520.500 218.500"/><path d="M632 260.500 L671 218.500"/><path d="M561.500 401.500 L522 444"/><path d="M630 401.500 L669.500 444"/></g>
  <rect x="556.500" y="255.500" width="79" height="150" rx="13" fill="#ff00ff" stroke="#e000e0" stroke-width="1.200"/>
  <rect x="558.300" y="257.300" width="75.400" height="146.400" rx="11.500" stroke="#ff66ff" stroke-width="1.300"/>
  <rect x="564.500" y="263.500" width="63" height="134" rx="9" stroke="#dc00dc" stroke-width="1.200"/>
  <rect x="566" y="265" width="60" height="131" rx="8" stroke="#ff66ff" stroke-width="1.200"/>
  <path d="M551 171.500 V198 M641.300 171.500 V198 M552 465 V491 M639 465 V491" stroke="#ff80ff" stroke-width=".8"/>
 </g>
 <!-- holes -->
 <circle cx="551.900" cy="214.800" r="7.500" fill="#ffff00"/><circle cx="551.900" cy="214.800" r="4.800" fill="#f5f5dc"/>
 <circle cx="639.600" cy="214.800" r="7.500" fill="#00e5ee"/><circle cx="639.600" cy="214.800" r="4.800" fill="#a52a2a"/>
 <circle cx="552.100" cy="448.700" r="7.500" fill="#f0a0f0"/><circle cx="552.100" cy="448.700" r="4.800" fill="#f5deb3"/>
 <circle cx="639.800" cy="448.700" r="7.500" fill="#ffa500"/><circle cx="639.800" cy="448.700" r="4.800" fill="#a52a2a"/>
 </g>

 <!-- scale bar -->
 <path d="M391 530 V536.500 H800 V530 M449.400 530 V536.500 M507.900 530 V536.500 M566.300 530 V536.500 M624.700 530 V536.500 M683.100 530 V536.500 M741.600 530 V536.500" fill="none" stroke="#444" stroke-width=".9"/>
 <text x="595.500" y="549" font-size="8.300" fill="#222" text-anchor="middle">Scale (700 mm)</text>
 <!-- branding -->
 <text x="203.800" y="541.200" font-size="7" fill="#333" textLength="37" lengthAdjust="spacing">AUTODESK</text><text x="241.500" y="538" font-size="3" fill="#333">®</text>
 <text x="203.800" y="549" font-size="7.400" font-weight="bold" fill="#222" textLength="75" lengthAdjust="spacingAndGlyphs">MOLDFLOW  INSIGHT</text><text x="244.800" y="545" font-size="3" fill="#222">®</text>
 <!-- triad -->
 <rect x="947" y="496.600" width="13.500" height="13.800" fill="#ff0000"/>
 <path d="M947 475 V510.400 H975" fill="none" stroke="#555" stroke-width=".9"/>
 <text x="948.300" y="481.800" font-size="9.500" fill="#111">Y</text><text x="947.500" y="510.300" font-size="9.500" fill="#111">Z</text><text x="976" y="510.500" font-size="9.500" fill="#111">X</text>
 <text x="985.500" y="532.800" font-size="8.300" fill="#222">0</text><text x="985.500" y="542.700" font-size="8.300" fill="#222">0</text><text x="985.500" y="552.600" font-size="8.300" fill="#222">0</text>

 <!-- nav bar -->
 <rect x="974.300" y="184.500" width="21" height="206.500" rx="3" fill="#f6f6f6" stroke="#b4b4b4" stroke-width=".9"/>
 <circle cx="991.300" cy="188" r="1.800" fill="#e0e0e0" stroke="#999" stroke-width=".6"/><circle cx="991.300" cy="386.500" r="1.800" fill="#e0e0e0" stroke="#999" stroke-width=".6"/>
 <g transform="translate(-.3 -1.200)"><path d="M979 198.500 h8 a5.500 5.500 0 0 1 5.500 5.500 a7 7 0 0 1 -7 7 a6.500 6.500 0 0 1 -6.500 -6.500z" fill="#ececec" stroke="#888" stroke-width=".9"/><circle cx="985.500" cy="204.500" r="3.800" fill="#fafafa" stroke="#888" stroke-width=".9"/></g>
 <path d="M983.800 215.500 h3.200 l-1.600 2z" fill="#555"/>
 <path d="M976 220.500 H994" stroke="#c8c8c8" stroke-width=".7"/>
 <rect x="975.500" y="222" width="18.800" height="17.500" fill="#cfe3f7"/>
 <path d="M982.500 226.500 v8.500 l2.200 -2 1.500 3 1.300 -.6 -1.500 -3 h3z" fill="#f8fbff" stroke="#667" stroke-width=".7"/>
 <g fill="none" stroke="#777" stroke-width=".8">
  <path d="M985 243.500 l2 2 h-1.300 v2 h2 v-1.300 l2 2 -2 2 v-1.300 h-2 v2 h1.300 l-2 2 -2 -2 h1.300 v-2 h-2 v1.300 l-2 -2 2 -2 v1.300 h2 v-2 h-1.300z" fill="#f0f0f0"/>
  <path d="M981 266 v-4 a.9 .9 0 0 1 1.800 0 v-2 a.9 .9 0 0 1 1.800 0 v-.5 a.9 .9 0 0 1 1.800 0 v1.500 a.9 .9 0 0 1 1.800 0 v5 q0 4 -3.500 4 q-3 0 -4.500 -3 l-1.500 -2.500 q.8 -1 2.300 1.500z" fill="#f4f4f4"/>
  <circle cx="983.500" cy="282.500" r="3.200" fill="#f4f4f4"/><path d="M986 285 l3.500 3.500" stroke-width="1.400"/><path d="M988 278.500 h3 M989.500 277 v3 M988 283 h3" stroke-width=".7"/>
  <rect x="980.500" y="296" width="8" height="7" fill="#f0f0f0"/><circle cx="984" cy="299.500" r="3.200" fill="#fafafa"/><path d="M986.500 302 l3.500 3.500" stroke-width="1.400"/>
  <circle cx="984" cy="317" r="3.800" fill="#f4f4f4"/><circle cx="984" cy="317" r="2" /><path d="M987 320 l3.500 3.500" stroke-width="1.400"/>
  <path d="M985 331 v10 M980 336 h10" stroke-dasharray="3.500 3"/>
 </g>
 <rect x="983.800" y="334.800" width="2.400" height="2.400" fill="#3a90e0"/>
 <path d="M980 351 h10" stroke="#777" stroke-width=".7"/><path d="M980 349.500 v3 M990 349.500 v3" stroke="#777" stroke-width=".6"/><rect x="980" y="353.500" width="10" height="3" fill="#f0c060" stroke="#c89830" stroke-width=".5"/>
 <rect x="980.500" y="367" width="9" height="7" fill="#f0f0f0" stroke="#666" stroke-width=".8"/><path d="M980.500 369 h9 M982 365.500 h6 M982 371.500 h3" stroke="#666" stroke-width=".7" fill="none"/>
</svg>
<!-- bottom tab strip -->
<div class="abs" style="left:195px;top:558px;width:802px;height:3px;background:#f8f8f8"></div>
<div class="abs" style="left:288.500px;top:561px;width:708.500px;height:1.500px;background:#6e6e6e"></div>
<div class="abs" style="left:193px;top:562.500px;width:804px;height:14px;background:#f0f0f0"></div>
<div class="abs" style="left:193px;top:558px;width:2px;height:18px;background:#7a7a7a"></div>
<div class="abs" style="left:195px;top:558px;width:93.500px;height:17.500px;background:#fff;border-right:1px solid #e4e4e4"></div>
<svg class="abs" style="left:195px;top:558px" width="94" height="18" viewBox="0 0 94 18"><path d="M2.500 6 h4 l2 2 v6 h-6z" fill="#fffbe8" stroke="#b89a50" stroke-width=".6"/><ellipse cx="5.400" cy="10.800" rx="2" ry="1.600" fill="#e8a010" transform="rotate(25 5.400 10.800)"/><path d="M82.500 7 l7.500 7.500 M90 7 l-7.500 7.500" stroke="#111" stroke-width="1.100"/></svg>
<div class="abs mono" style="left:206px;top:563.500px;line-height:10px">AB920XT78_10a5wi...</div>
<!-- status bar -->
<div class="abs" style="left:0;top:576px;width:1000px;height:19px;background:linear-gradient(#c8c8c8 0,#ececec 6%,#e0e0e0 40%,#cfcfcf 80%,#e4e4e4 88%,#ececec 100%)"></div>
<div class="abs" style="left:2.600px;top:579px;font-size:8.400px;letter-spacing:-.3px;line-height:12px;color:#333">Ready</div>
<div class="abs" style="left:829px;top:577.500px;width:1px;height:14px;background:#c4c4c4"></div>
<div class="abs" style="left:868px;top:577.500px;width:1px;height:14px;background:#c4c4c4"></div>
<svg class="abs" style="left:832px;top:579px" width="12" height="12" viewBox="0 0 12 12"><rect x="1" y="1.500" width="9" height="9" fill="#f4f6f8" stroke="#555" stroke-width=".7"/><rect x="1" y="1.500" width="9" height="1.600" fill="#667"/><path d="M2.500 8.500 h6" stroke="#444" stroke-width=".8" stroke-dasharray="1.200 .6"/><circle cx="8.500" cy="3.500" r="1.800" fill="#dcebfa" stroke="#3a88d8" stroke-width=".7"/></svg>
<div class="abs" style="left:846px;top:579px;font-size:9px;letter-spacing:-.3px;line-height:12px;color:#222">Logs</div>
<div class="abs" style="left:873.500px;top:579px;font-size:9px;line-height:12px;color:#222;white-space:nowrap;letter-spacing:-.3px">Thermoplastics Injection Molding</div>
</body></html>
